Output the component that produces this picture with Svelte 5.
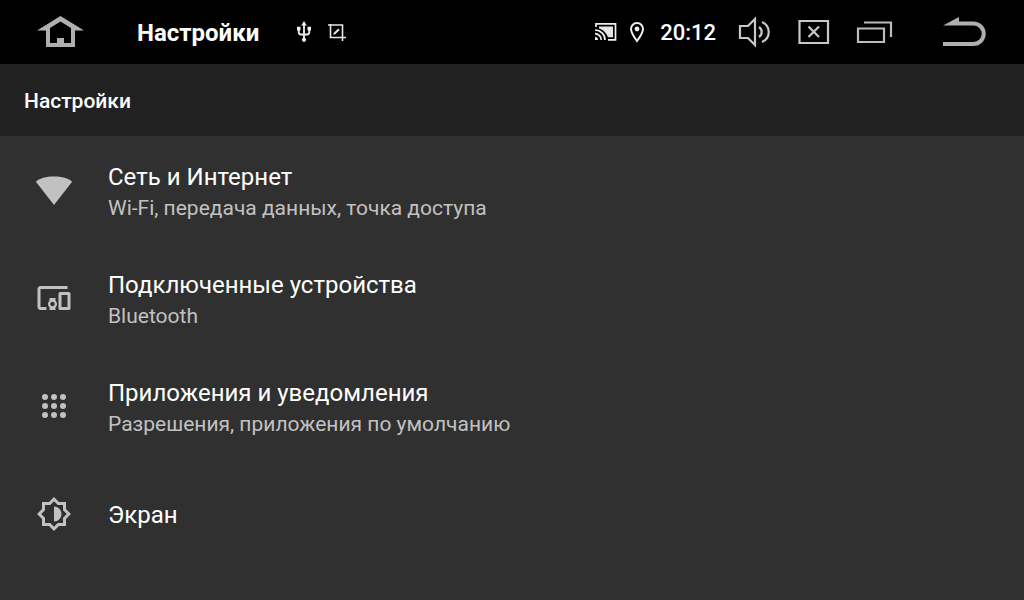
<script>
  const title = 'Настройки';

  const items = [
    { icon: 'wifi', title: 'Сеть и Интернет', summary: 'Wi-Fi, передача данных, точка доступа' },
    { icon: 'devices', title: 'Подключенные устройства', summary: 'Bluetooth' },
    { icon: 'apps', title: 'Приложения и уведомления', summary: 'Разрешения, приложения по умолчанию' },
    { icon: 'display', title: 'Экран', summary: '' }
  ];

  const dots = [6, 12, 18];
</script>

<div class="screen">
  <header class="status-bar">
    <button class="nav" aria-label="Домой">
      <svg width="48" height="32" viewBox="0 0 48 32" fill="#afafaf">
        <path fill-rule="evenodd" d="M24.5 0L48 14.5h-9V31H10V14.5H1zM24.5 5.5L14 12v15h7v-5h7v5h7V12z" />
      </svg>
    </button>
    <span class="app-name">{title}</span>
    <div class="notifications">
      <svg width="16" height="22" viewBox="0 0 16 22" fill="none" stroke="#f0f0f0" stroke-width="1.8">
        <path d="M8 3v15M2.7 8v3c0 1.600 1 2.500 2.500 2.500h5.600c1.500 0 2.500-.9 2.500-2.500V8" />
        <path d="M8 0l2.800 4.500H5.200zM1 5.800h3.500v3.700H1zM11.500 5.800H15v3.700h-3.500z" fill="#f0f0f0" stroke="none" />
        <circle cx="8" cy="18.800" r="2.100" fill="#f0f0f0" stroke="none" />
      </svg>
      <svg width="18" height="18" viewBox="0 0 18 18" fill="none" stroke="#e8e8e8" stroke-width="1.6">
        <path d="M0 2h14.500v16M2.500 1v13.500H18" />
        <path d="M5.200 11.800l.6-2 4.400-4.400 1.500 1.500-4.400 4.400z" fill="#e8e8e8" stroke="none" />
      </svg>
    </div>

    <div class="indicators">
      <svg width="24" height="22" viewBox="0 0 24 22" fill="none" stroke="#f0f0f0" stroke-width="1.7">
        <path d="M2 6V2.800h19.500v16H14" />
        <path d="M5 5.500h14v10.800h-5C12.500 12 9 8.500 5 7.500z" fill="#e4e4e4" stroke="none" />
        <path d="M1 9c5.500 0 10 4.500 10 10M1 12.700c3.500 0 6.300 2.800 6.300 6.300" />
        <path d="M1 16c1.800 0 3 1.300 3 3H1z" fill="#f0f0f0" stroke="none" />
      </svg>
      <svg width="16" height="22" viewBox="0 0 16 22" fill="none" stroke="#f0f0f0" stroke-width="2">
        <path d="M8 20C5 16 2 12 2 8a6 6 0 0 1 12 0c0 4-3 8-6 12z" />
        <circle cx="8" cy="8" r="2.400" fill="#f0f0f0" stroke="none" />
      </svg>
      <time class="clock">20:12</time>
    </div>

    <div class="controls">
      <button class="nav" aria-label="Громкость">
        <svg width="34" height="32" viewBox="0 0 34 32" fill="none" stroke="#c8c8c8" stroke-width="2.2">
          <path d="M2 10h8l7-7v26l-7-7H2z" />
          <path d="M21 11a6 6 0 0 1 0 10M24 6c9 4 9 16 0 20" />
        </svg>
      </button>
      <button class="nav" aria-label="Закрыть">
        <svg width="32" height="28" viewBox="0 0 32 28" fill="none" stroke="#c8c8c8" stroke-width="2.2">
          <path d="M1.500 3h28.500v22H1.500zM10.500 8.500l10.500 10.500M21 8.500L10.500 19" />
        </svg>
      </button>
      <button class="nav" aria-label="Недавние приложения">
        <svg width="38" height="24" viewBox="0 0 38 24" fill="none" stroke="#bcbcbc" stroke-width="2.2">
          <path d="M2 8.500h26v13.500H2zM8 2.500h27v14.500" />
        </svg>
      </button>
      <button class="nav back" aria-label="Назад">
        <svg width="48" height="32" viewBox="0 0 48 32">
          <path d="M3 9.500L19 1v4.500h14.500a12.200 12.200 0 0 1 0 24.500H3v-4h30.500a8.200 8.200 0 0 0 0-16.500z" fill="#afafaf" />
        </svg>
      </button>
    </div>
  </header>

  <div class="toolbar">
    <h1>{title}</h1>
  </div>

  <main>
    <ul>
      {#each items as item (item.icon)}
        <li>
          <button class="row">
            <svg class="row-icon" viewBox="0 0 24 24">
              {#if item.icon === 'wifi'}
                <path d="M12 22L.2 6.800C.1 6.500.2 6.200.4 6 2.500 4.400 6.500 3 12 3s9.500 1.400 11.600 3c.2.2.3.5.2.8z" />
              {:else if item.icon === 'devices'}
                <path d="M3 6h18V4H3c-1.100 0-2 .9-2 2v12c0 1.100.9 2 2 2h4v-2H3zM13 12H9v1.780c-.61.550-1 1.330-1 2.220s.39 1.670 1 2.220V20h4v-1.780c.61-.550 1-1.340 1-2.220s-.39-1.670-1-2.220zm-2 5.500c-.83 0-1.500-.67-1.500-1.500s.67-1.500 1.500-1.500 1.500.67 1.500 1.500-.67 1.500-1.500 1.500zM22 8h-6c-.5 0-1 .5-1 1v10c0 .5.5 1 1 1h6c.5 0 1-.5 1-1V9c0-.5-.5-1-1-1zm-1 10h-4v-8h4z" />
              {:else if item.icon === 'apps'}
                {#each dots as y}
                  {#each dots as x}
                    <circle cx={x} cy={y} r="2" />
                  {/each}
                {/each}
              {:else}
                <path d="M20 15.310L23.310 12 20 8.690V4h-4.690L12 .69 8.690 4H4v4.690L.69 12 4 15.310V20h4.690L12 23.310 15.310 20H20zm-2-.82V18h-3.510L12 20.490 9.510 18H6v-3.510L3.510 12 6 9.510V6h3.510L12 3.510 14.490 6H18v3.510L20.490 12zM12 7v10c2.760 0 5-2.240 5-5s-2.240-5-5-5z" />
              {/if}
            </svg>
            <span class="row-text">
              <span class="row-title">{item.title}</span>
              {#if item.summary}
                <span class="row-summary">{item.summary}</span>
              {/if}
            </span>
          </button>
        </li>
      {/each}
    </ul>
  </main>
</div>

<style>
  :global(body) {
    background: #303030;
  }

  .screen {
    min-height: 100vh;
    background: #303030;
    color: #fff;
    font-family: Roboto, 'Liberation Sans', sans-serif;
  }

  svg {
    display: block;
    flex: none;
  }

  button {
    border: 0;
    padding: 0;
    background: none;
    color: inherit;
    font: inherit;
    cursor: pointer;
  }

  .status-bar {
    display: flex;
    align-items: center;
    height: 64px;
    padding: 0 36px;
    background: #000;
  }

  .app-name {
    margin-left: 53px;
    padding-top: 2px;
    font-size: 24px;
    line-height: 32px;
    font-weight: 700;
  }

  .notifications {
    display: flex;
    align-items: center;
    gap: 16px;
    margin-left: 37px;
  }

  .indicators {
    display: flex;
    align-items: center;
    gap: 11px;
    margin-left: auto;
  }

  .clock {
    margin-left: 4px;
    padding-top: 2px;
    font-size: 22px;
    line-height: 32px;
    font-weight: 500;
  }

  .controls {
    display: flex;
    align-items: center;
    gap: 26px;
    margin-left: 22px;
  }

  .back {
    margin-left: 20px;
  }

  .toolbar {
    display: flex;
    align-items: center;
    height: 72px;
    padding: 0 24px;
    background: #212121;
  }

  h1 {
    margin: 0;
    padding-top: 2px;
    font-size: 21px;
    line-height: 28px;
    font-weight: 500;
  }

  ul {
    margin: 0;
    padding: 0;
    list-style: none;
  }

  .row {
    display: flex;
    align-items: center;
    gap: 36px;
    width: 100%;
    min-height: 108px;
    padding: 0 36px;
    text-align: left;
  }

  .row-icon {
    width: 36px;
    height: 36px;
    fill: #c1c1c1;
  }

  .row-text {
    display: flex;
    flex-direction: column;
    padding-top: 2px;
  }

  .row-title {
    font-size: 24px;
    line-height: 34px;
  }

  .row-summary {
    font-size: 21px;
    line-height: 28px;
    color: #c1c1c1;
  }
</style>
